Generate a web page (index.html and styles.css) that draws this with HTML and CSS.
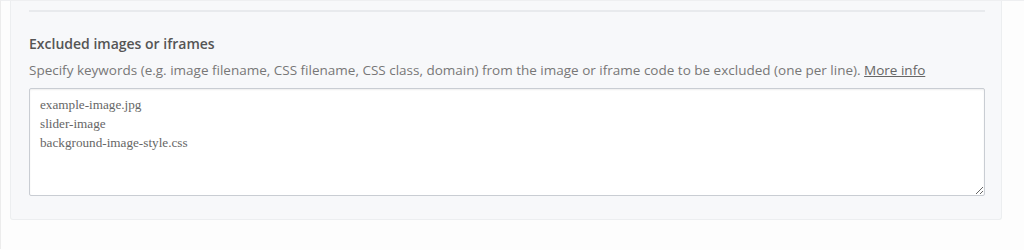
FILE: index.html
```html
<!DOCTYPE html>
<html>
<head>
<meta charset="utf-8">
<link rel="stylesheet" href="styles.css">
</head>
<body>
<div class="page">
  <div class="panel">
    <div class="divider"></div>
    <h3 class="title">Excluded images or iframes</h3>
    <p class="desc">Specify keywords (e.g. image filename, CSS filename, CSS class, domain) from the image or iframe code to be excluded (one per line). <a class="more" href="#">More info</a></p>
    <textarea class="field">example-image.jpg
slider-image
background-image-style.css</textarea>
  </div>
</div>
</body>
</html>
```

FILE: styles.css
```css
html, body {
  margin: 0;
  padding: 0;
  background: #fdfdfd;
}
.page {
  border-top: 1px solid #eeeff1;
  border-left: 1px solid #ececec;
  height: 249px;
  box-sizing: border-box;
  padding-left: 9px;
}
.panel {
  width: 992px;
  box-sizing: border-box;
  background: #f7f8fa;
  border: 1px solid #eceef0;
  border-top: none;
  border-radius: 0 0 3px 3px;
  padding: 9px 16px 23px 18px;
}
.divider {
  height: 2px;
  background: #e8eaed;
}
.title {
  margin: 22px 0 0 0;
  font-family: "Open Sans", "Noto Sans", sans-serif;
  font-weight: 600;
  font-size: 14px;
  line-height: 20px;
  color: #555;
}
.desc {
  margin: 7px 0 0 0;
  font-family: "Open Sans", "Noto Sans", sans-serif;
  font-size: 13.5px;
  line-height: 18px;
  color: #777;
}
.more {
  color: #666;
  text-decoration: underline;
}
.field {
  display: block;
  margin-top: 9px;
  width: 100%;
  height: 108px;
  box-sizing: border-box;
  border: 1px solid #c9cdd3;
  border-radius: 2px;
  box-shadow: inset 0 1px 2px rgba(0,0,0,0.07);
  background: #fff;
  padding: 6px 10px;
  font-family: "Liberation Serif", "Times New Roman", serif;
  font-size: 13.2px;
  line-height: 19px;
  color: #666;
  resize: both;
}
```
